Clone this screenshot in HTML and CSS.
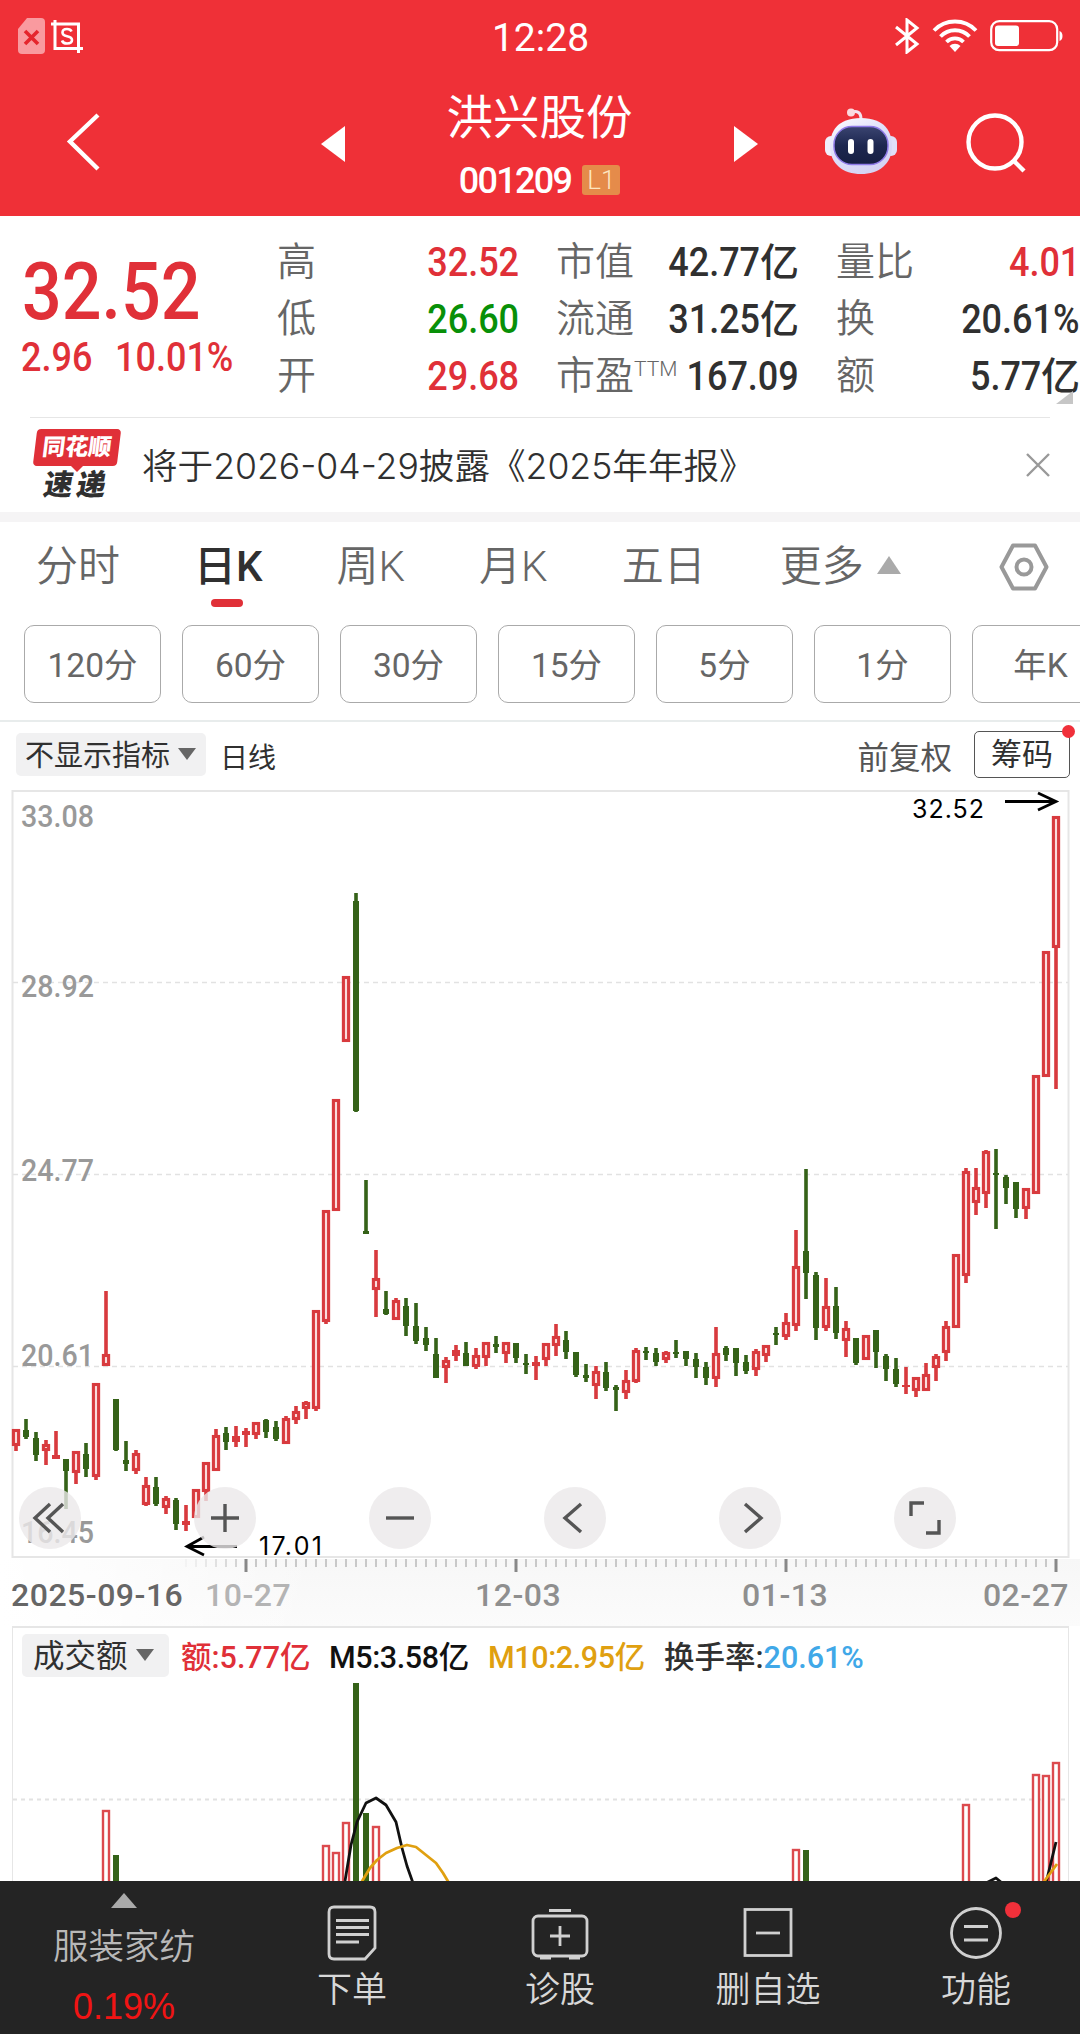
FILE: index.html
```html
<!DOCTYPE html>
<html lang="zh-CN">
<head>
  <meta charset="UTF-8">
  <meta name="viewport" content="width=device-width, initial-scale=1.0">
  <title>洪兴股份 001209</title>
  <link rel="stylesheet" href="styles.css">
</head>
<body>

  <header class="top">
    <div class="status">
      <div class="status-left">
        <svg width="27" height="36" viewBox="0 0 27 36">
          <path d="M9 0H23a4 4 0 0 1 4 4V32a4 4 0 0 1-4 4H4a4 4 0 0 1-4-4V11Z" fill="#f99a9f"/>
          <path d="M7 13L20 26M20 13L7 26" stroke="#e5252d" stroke-width="3.6"/>
        </svg>
        <svg width="32" height="33" viewBox="0 0 32 33" fill="none" stroke="#fff">
          <path d="M0 4H27.500V33M4 0V28.500H32" stroke-width="3"/>
          <path d="M20.500 11.500Q19.500 9 16 9Q11.500 9 11.500 12.500Q11.500 15.500 16 16.200Q21 17 21 20Q21 23.500 16 23.500Q12 23.500 11 20.500" stroke-width="2.600"/>
        </svg>
      </div>
      <div class="clock">12:28</div>
      <div class="status-right">
        <svg width="26" height="36" viewBox="0 0 26 36" fill="none" stroke="#fff" stroke-width="3">
          <path d="M2 9L23 26L13 34V2L23 10L2 27"/>
        </svg>
        <svg width="46" height="34" viewBox="0 0 46 34" fill="none" stroke="#fff" stroke-width="3.800">
          <path d="M2 11.500A29 29 0 0 1 44 11.500M8.500 17.500A20 20 0 0 1 37.500 17.500M14.500 23A12 12 0 0 1 31.500 23"/>
          <path d="M23 33L17.500 27A8 8 0 0 1 28.500 27Z" fill="#fff" stroke="none"/>
        </svg>
        <svg width="73" height="32" viewBox="0 0 73 32">
          <rect x="1.200" y="1.200" width="66" height="29" rx="8" fill="none" stroke="#fff" stroke-width="2.200"/>
          <rect x="5" y="5.500" width="24" height="20.500" rx="3" fill="#fff"/>
          <path d="M69.500 11Q72.500 12 72.500 16T69.500 21Z" fill="#fff"/>
        </svg>
      </div>
    </div>

    <div class="title-bar">
      <svg class="back" width="34" height="58" viewBox="0 0 34 58">
        <path d="M32 2L4 28.500L32 56" fill="none" stroke="#fff" stroke-width="4.400"/>
      </svg>
      <div class="stock">
        <svg width="24" height="36" viewBox="0 0 24 36"><path d="M24 0V36L0 18Z" fill="#fff"/></svg>
        <div class="stock-name">
          <h1>洪兴股份</h1>
          <div class="stock-code"><span class="code">001209</span><span class="level">L1</span></div>
        </div>
        <svg width="24" height="36" viewBox="0 0 24 36"><path d="M0 0V36L24 18Z" fill="#fff"/></svg>
      </div>
      <svg class="robot" width="72" height="66" viewBox="0 0 72 66">
        <defs>
          <linearGradient id="shell" x1="0" y1="0" x2="0.600" y2="1">
            <stop offset="0" stop-color="#fff"/>
            <stop offset="0.500" stop-color="#dfe0fa"/>
            <stop offset="1" stop-color="#d5d3f3"/>
          </linearGradient>
          <linearGradient id="face" x1="0" y1="0" x2="0" y2="1">
            <stop offset="0" stop-color="#3a4470"/>
            <stop offset="0.500" stop-color="#1d2750"/>
            <stop offset="1" stop-color="#171f42"/>
          </linearGradient>
        </defs>
        <path d="M25 4.500Q36 1 36 11" fill="none" stroke="#f2e4f0" stroke-width="3"/>
        <circle cx="26" cy="4.500" r="4" fill="#fbd9de"/>
        <rect x="0" y="28" width="12" height="20" rx="6" fill="#f0effc"/>
        <rect x="60" y="28" width="12" height="20" rx="6" fill="#e0dff8"/>
        <path d="M36 10C60 10 67 24 67 38C67 56 54 66 36 66S5 56 5 38C5 24 12 10 36 10Z" fill="url(#shell)"/>
        <rect x="9" y="18.500" width="54" height="38" rx="18" fill="url(#face)" stroke="#8f7be8" stroke-width="1.500"/>
        <rect x="23" y="31" width="6" height="15" rx="3" fill="#fff"/>
        <rect x="42.500" y="31" width="6" height="15" rx="3" fill="#fff"/>
      </svg>
      <svg class="search" width="62" height="60" viewBox="0 0 62 60" fill="none" stroke="#fff" stroke-width="4.400">
        <circle cx="29" cy="29" r="26.500"/>
        <path d="M48 48L58 58"/>
      </svg>
    </div>
  </header>

  <section class="quote">
    <div class="price">
      <div class="last"><span class="num">32.52</span></div>
      <div class="change"><span class="num">2.96</span><span class="num">10.01%</span></div>
    </div>
    <dl class="stats stats-a">
      <dt>高</dt><dd class="up"><span class="num">32.52</span></dd>
      <dt>低</dt><dd class="down"><span class="num">26.60</span></dd>
      <dt>开</dt><dd class="up"><span class="num">29.68</span></dd>
    </dl>
    <dl class="stats stats-b">
      <dt>市值</dt><dd><span class="num">42.77</span>亿</dd>
      <dt>流通</dt><dd><span class="num">31.25</span>亿</dd>
      <dt>市盈<sup>TTM</sup></dt><dd><span class="num">167.09</span></dd>
    </dl>
    <dl class="stats stats-c">
      <dt>量比</dt><dd class="up"><span class="num">4.01</span></dd>
      <dt>换</dt><dd><span class="num">20.61%</span></dd>
      <dt>额</dt><dd><span class="num">5.77</span>亿</dd>
    </dl>
    <i class="corner"></i>
  </section>

  <section class="notice">
    <div class="logo">
      <span class="logo-top">同花顺</span>
      <i class="logo-tip"></i>
      <span class="logo-bottom">速递</span>
    </div>
    <p>将于2026-04-29披露《2025年年报》</p>
    <svg width="24" height="24" viewBox="0 0 24 24"><path d="M1 1L23 23M23 1L1 23" stroke="#999" stroke-width="2.400"/></svg>
  </section>

  <nav class="tabs">
    <span>分时</span>
    <span class="active">日K</span>
    <span>周K</span>
    <span>月K</span>
    <span>五日</span>
    <span class="more">更多<i class="tri-up"></i></span>
    <svg width="50" height="48" viewBox="0 0 50 48" fill="none" stroke="#999" stroke-width="4">
      <path d="M14 2.500H36L47.500 24L36 45.500H14L2.500 24Z" stroke-linejoin="round"/>
      <circle cx="25" cy="24" r="7.500"/>
    </svg>
  </nav>

  <div class="periods">
    <span>120分</span><span>60分</span><span>30分</span><span>15分</span><span>5分</span><span>1分</span><span>年K</span>
  </div>

  <div class="toolbar">
    <span class="picker">不显示指标<i class="tri-down"></i></span>
    <span class="line-type">日线</span>
    <span class="adjust">前复权</span>
    <span class="chips">筹码<i class="dot"></i></span>
  </div>

  <section class="kline">
    <svg id="kline" width="1080" height="777" viewBox="0 782 1080 777">
      <rect x="12.500" y="791" width="1056" height="766" fill="none" stroke="#e6e6e6" stroke-width="2"/>
      <path d="M13 982.500H1068M13 1174.500H1068M13 1366.500H1068" stroke="#e2e2e2" stroke-width="1.500" stroke-dasharray="5 4"/>
      <g class="axis">
        <text x="21" y="827" textLength="73" lengthAdjust="spacingAndGlyphs">33.08</text>
        <text x="21" y="997" textLength="73" lengthAdjust="spacingAndGlyphs">28.92</text>
        <text x="21" y="1181" textLength="73" lengthAdjust="spacingAndGlyphs">24.77</text>
        <text x="21" y="1366" textLength="73" lengthAdjust="spacingAndGlyphs">20.61</text>
        <text x="21" y="1543" textLength="73" lengthAdjust="spacingAndGlyphs">16.45</text>
      </g>
      <g id="candles"></g>
      <g class="mark">
        <path d="M1005 801.500H1055M1038 793L1056 801.500L1038 810"/>
        <path d="M237 1546.500H187M204 1537L187 1546.500L204 1555"/>
        <text x="912" y="818" textLength="72">32.52</text>
        <text x="259" y="1555" textLength="63">17.01</text>
      </g>
    </svg>
    <div class="controls">
      <button><svg viewBox="0 0 62 62"><path d="M31 17L16 31L31 45M44 17L29 31L44 45"/></svg></button>
      <button><svg viewBox="0 0 62 62"><path d="M31 17V45M17 31H45"/></svg></button>
      <button><svg viewBox="0 0 62 62"><path d="M17 31H45"/></svg></button>
      <button><svg viewBox="0 0 62 62"><path d="M37 17L21 31L37 45"/></svg></button>
      <button><svg viewBox="0 0 62 62"><path d="M26 17L42 31L26 45"/></svg></button>
      <button><svg viewBox="0 0 62 62"><path d="M17 29V16H30M45 33V46H32"/></svg></button>
    </div>
  </section>

  <div class="timeline">
    <svg id="ticks" width="1080" height="15" viewBox="0 0 1080 15"></svg>
    <div class="dates">
      <span class="first">2025-09-16</span>
      <span class="faded">10-27</span>
      <span>12-03</span>
      <span>01-13</span>
      <span>02-27</span>
    </div>
  </div>

  <section class="volume">
    <div class="volume-head">
      <span class="picker">成交额<i class="tri-down"></i></span>
      <span class="v-amount">额:5.77亿</span>
      <span class="v-m5">M5:3.58亿</span>
      <span class="v-m10">M10:2.95亿</span>
      <span class="v-rate">换手率:<em>20.61%</em></span>
    </div>
    <svg width="1055" height="201" viewBox="13 1680 1055 201">
      <path d="M13 1799.500H1068" stroke="#e2e2e2" stroke-width="2" stroke-dasharray="4 4"/>
      <g id="bars"></g>
      <g fill="none" stroke-width="2.800" stroke-linejoin="round">
        <path stroke="#111" d="M345 1881L351 1845L357 1822L366 1803L376 1798L386 1805L396 1822L402 1848L407 1866L413 1883M986 1883L996 1878L1002 1883M1046 1883L1056 1842"/>
        <path stroke="#e0a010" d="M361 1883L370 1868L377 1860L386 1853L397 1848L407 1845L416 1847L426 1855L436 1863L443 1873L449 1883M1043 1883L1057 1864"/>
      </g>
    </svg>
  </section>

  <footer class="bottom">
    <div class="sector">
      <i class="tri-up"></i>
      <span>服装家纺</span>
      <b>0.19%</b>
    </div>
    <div class="item">
      <svg width="60" height="56" viewBox="0 0 60 56">
        <path d="M12 2H48Q53 2 53 7V43L43 54H12Q7 54 7 49V7Q7 2 12 2Z"/>
        <path d="M14 15.500H47M14 22.500H47M14 29.500H47M14 37H37"/>
      </svg>
      <span>下单</span>
    </div>
    <div class="item">
      <svg width="60" height="56" viewBox="0 0 60 56">
        <rect x="3" y="11" width="54" height="40" rx="5"/>
        <path d="M19 5.500H41M30 21V41M20 31H40M10 53H21M39 53H50"/>
      </svg>
      <span>诊股</span>
    </div>
    <div class="item">
      <svg width="60" height="56" viewBox="0 0 60 56">
        <rect x="7" y="4.500" width="46" height="46"/>
        <path d="M18 28H42"/>
      </svg>
      <span>删自选</span>
    </div>
    <div class="item">
      <svg width="60" height="56" viewBox="0 0 60 56">
        <circle cx="30" cy="28" r="24.500"/>
        <path d="M18 21.500H42M18 35H42"/>
      </svg>
      <i class="dot"></i>
      <span>功能</span>
    </div>
  </footer>

  <script src="chart.js"></script>
</body>
</html>
```

FILE: styles.css
```css
* {
  box-sizing: border-box;
}

body {
  margin: 0;
  width: 1080px;
  height: 2034px;
  overflow: hidden;
  background: #fff;
  color: #303030;
  font-family: Roboto, "Noto Sans CJK SC", sans-serif;
}

svg {
  display: block;
  flex-shrink: 0;
}

h1, p, dl, dd {
  margin: 0;
}

i, em {
  font-style: normal;
}

.num {
  display: inline-block;
  transform: scaleX(0.9);
  transform-origin: right;
}

.tri-up,
.tri-down {
  display: inline-block;
  border: solid transparent;
}

/* header */
.top {
  height: 216px;
  background: #ef3037;
  color: #fff;
}

.status {
  height: 72px;
  padding: 0 17px 0 18px;
  display: grid;
  grid-template-columns: 1fr auto 1fr;
  align-items: center;
}

.status-left,
.status-right {
  display: flex;
  align-items: center;
  gap: 6px;
}

.status-right {
  justify-content: flex-end;
  gap: 12px;
}

.clock {
  font-size: 39px;
  line-height: 40px;
  padding-top: 4px;
}

.title-bar {
  height: 144px;
  padding: 0 52px 0 66px;
  display: flex;
  align-items: flex-start;
}

.back {
  margin: 41px 221px 0 0;
}

.stock {
  width: 438px;
  display: flex;
  justify-content: space-between;
}

.stock > svg {
  margin-top: 54px;
}

.stock-name {
  text-align: center;
}

.stock-name h1 {
  margin-top: 18px;
  font-size: 46.5px;
  line-height: 56px;
  font-weight: 400;
}

.stock-code {
  display: flex;
  align-items: center;
  justify-content: center;
  margin-top: 19px;
  height: 30px;
}

.code {
  padding-top: 2px;
  font-size: 36px;
  font-weight: 500;
  letter-spacing: -1.7px;
  margin-right: 11px;
}

.level {
  width: 38px;
  height: 30px;
  border-radius: 3px;
  background: #e58b4a;
  color: #fde6c0;
  font-size: 26px;
  font-weight: 300;
  line-height: 31px;
}

.robot {
  margin: 36px 0 0 67px;
}

.search {
  margin: 41px 0 0 69px;
}

/* quote */
.quote {
  height: 201px;
  display: flex;
  position: relative;
}

.price {
  width: 277px;
  padding-left: 22px;
  color: #e03038;
}

.price .num {
  transform-origin: left;
}

.last {
  margin-top: 36px;
  font-size: 80px;
  line-height: 80px;
  font-weight: 500;
}

.last .num {
  transform: scaleX(0.875);
}

.change {
  display: flex;
  gap: 15px;
  margin: 3px 0 0 -1px;
  font-size: 40px;
  line-height: 46px;
  font-weight: 500;
}

.stats {
  display: grid;
  grid-template-columns: auto auto;
  grid-template-rows: repeat(3, 57px);
  justify-content: space-between;
  align-items: center;
  padding-top: 18px;
  font-size: 39px;
  line-height: 57px;
  white-space: nowrap;
}

.stats dt {
  color: #666;
  font-weight: 350;
}

.stats dd {
  text-align: right;
  font-weight: 500;
}

.stats .num {
  margin-left: -20px;
  font-size: 40px;
}

.stats-a {
  width: 242px;
}

.stats-b {
  width: 243px;
  margin-left: 37px;
}

.stats-c {
  width: 244px;
  margin-left: 37px;
}

.stats sup {
  font-size: 21px;
  line-height: 0;
  vertical-align: 13px;
}

.up {
  color: #e03038;
}

.down {
  color: #089008;
}

.corner {
  position: absolute;
  right: 7px;
  bottom: 13px;
  border-left: 17px solid transparent;
  border-bottom: 13px solid #c6c6c6;
}

/* notice */
.notice {
  margin: 0 30px;
  height: 95px;
  border-top: 1px solid #e6e6e6;
  display: flex;
  align-items: center;
}

.logo {
  width: 90px;
  margin-left: 2px;
  display: flex;
  flex-direction: column;
  align-items: center;
  font-weight: 900;
}

.logo-top {
  width: 84px;
  height: 37px;
  border-radius: 4px;
  background: #e03038;
  color: #fff;
  font-size: 23px;
  line-height: 37px;
  text-align: center;
  transform: skewX(-7deg);
}

.logo-tip {
  border: solid transparent;
  border-width: 6px 6px 0;
  border-top-color: #e03038;
}

.logo-bottom {
  margin-top: -3px;
  font-size: 29px;
  line-height: 32px;
  letter-spacing: 4px;
  transform: skewX(-10deg);
}

.notice p {
  flex: 1;
  margin: -4px 0 0 20px;
  font-family: Inter, "Noto Sans CJK SC", sans-serif;
  font-size: 35.6px;
  font-weight: 350;
}

/* tabs */
.tabs {
  height: 103px;
  border-top: 10px solid #f5f4f5;
  padding: 0 31px 4px 36px;
  display: flex;
  align-items: center;
  font-size: 42px;
  line-height: 60px;
  color: #666;
  font-weight: 350;
}

.tabs span {
  margin-right: 74px;
  white-space: nowrap;
}

.tabs .active {
  color: #303030;
  font-weight: 500;
  position: relative;
}

.tabs .active::after {
  content: "";
  position: absolute;
  left: 17px;
  bottom: -10px;
  width: 32px;
  height: 8px;
  border-radius: 4px;
  background: #e03038;
}

.tabs .more {
  margin-right: auto;
}

.more .tri-up {
  margin: 0 0 7px 13px;
  border-width: 0 12px 18px;
  border-bottom-color: #aaa;
}

/* period pills */
.periods {
  height: 107px;
  padding: 10px 0 0 24px;
  border-bottom: 2px solid #e8ecec;
  display: flex;
  gap: 21px;
  overflow: hidden;
}

.periods span {
  flex: 0 0 137px;
  height: 78px;
  border: 1.5px solid #aaa;
  border-radius: 10px;
  color: #666;
  font-size: 33.5px;
  line-height: 79px;
  text-align: center;
}

/* indicator toolbar */
.toolbar {
  height: 60px;
  padding: 5px 10px 0 16px;
  display: flex;
  align-items: center;
}

.picker {
  height: 43px;
  padding: 0 10px 0 9px;
  border-radius: 5px;
  background: #f1f1f2;
  font-size: 29px;
  line-height: 46px;
  white-space: nowrap;
}

.tri-down {
  margin: 0 0 6px 8px;
  border-width: 12px 9px 0;
  border-top-color: #666;
}

.line-type {
  margin-left: 14px;
  padding-top: 2px;
  font-size: 28px;
}

.adjust {
  margin-left: auto;
  color: #555;
  font-size: 31.5px;
}

.chips {
  position: relative;
  width: 96px;
  height: 47px;
  margin-left: 22px;
  border: 1.5px solid #555;
  border-radius: 5px;
  font-size: 31px;
  line-height: 46px;
  text-align: center;
}

.dot {
  position: absolute;
  border-radius: 50%;
  background: #f0303a;
}

.chips .dot {
  top: -7px;
  right: -6px;
  width: 13px;
  height: 13px;
}

/* chart */
.kline {
  position: relative;
  height: 777px;
}

.kline > svg {
  overflow: visible;
}

.axis text {
  fill: #999;
  font-size: 31px;
  font-weight: 500;
}

.mark path {
  fill: none;
  stroke: #000;
  stroke-width: 2.8;
}

.mark text {
  font-family: Inter, sans-serif;
  font-size: 25px;
  font-weight: 400;
}

.controls {
  position: absolute;
  left: 19px;
  bottom: 10px;
  display: flex;
  gap: 113px;
}

.controls button {
  width: 62px;
  height: 62px;
  padding: 0;
  border: none;
  border-radius: 50%;
  background: rgba(235, 233, 234, 0.8);
}

.controls path {
  fill: none;
  stroke: #555;
  stroke-width: 3.4;
}

.timeline {
  height: 67px;
  background: linear-gradient(90deg, #fff, transparent 30%), linear-gradient(#f7f7f7, #fbfbfb);
}

.dates {
  padding: 5px 11px 0;
  display: grid;
  grid-template-columns: 194px 270px 267px 1fr auto;
  color: #8f8f8f;
  font-size: 32px;
  line-height: 32px;
  font-weight: 500;
  letter-spacing: 0.5px;
}

.dates .first {
  color: #666;
}

.dates .faded {
  color: #b4b4b4;
}

/* volume */
.volume {
  height: 255px;
  margin: 0 11px 0 12px;
  border: solid #e6e6e6;
  border-width: 2px 1px 0;
}

.volume-head {
  height: 52px;
  padding: 2px 9px 0;
  display: flex;
  align-items: center;
  font-size: 30.5px;
  font-weight: 500;
  white-space: nowrap;
}

.volume-head .picker {
  width: 147px;
  height: 43px;
  margin-right: 12px;
  padding-left: 11px;
  font-size: 31.5px;
  font-weight: 400;
}

.v-amount {
  width: 148px;
  color: #e03038;
}

.v-m5 {
  width: 159px;
  color: #111;
  letter-spacing: -0.4px;
}

.v-m10 {
  width: 176px;
  color: #e0a010;
  letter-spacing: -0.4px;
}

.v-rate em {
  color: #40a8e8;
}

/* bottom bar */
.bottom {
  height: 153px;
  background: #242424;
  color: #d8d8d8;
  display: flex;
}

.sector {
  width: 248px;
  padding-top: 12px;
  display: flex;
  flex-direction: column;
  align-items: center;
  font-size: 35.5px;
}

.sector .tri-up {
  border-width: 0 13px 15px;
  border-bottom-color: #aaa;
}

.sector span {
  margin-top: 14px;
  line-height: 50px;
  color: #b8b8b8;
  font-weight: 350;
}

.sector b {
  margin-top: 15px;
  color: #f01414;
  font-family: "Liberation Sans", sans-serif;
  font-size: 36px;
  line-height: 40px;
  font-weight: 400;
}

.item {
  position: relative;
  width: 208px;
  padding-top: 24px;
  display: flex;
  flex-direction: column;
  align-items: center;
  font-size: 35px;
  line-height: 50px;
  font-weight: 350;
}

.item span {
  margin-top: 5px;
}

.item svg {
  fill: none;
  stroke: #d0d0d0;
  stroke-width: 2.8;
}

.item .dot {
  top: 21px;
  right: 59px;
  width: 16px;
  height: 16px;
}
```

FILE: chart.js
```js
const NS = "http://www.w3.org/2000/svg";
const RED = "#d83a3e";
const GREEN = "#356218";

// [up or down, high, body top, body bottom, low]
const candles = [
  ["r",1429,1429,1446,1451],["g",1419,1430,1437,1439],["g",1432,1438,1455,1461],["r",1440,1444,1451,1465],
  ["r",1431,1455,1459,1459],["g",1459,1459,1471,1509],["r",1451,1451,1473,1484],["g",1443,1454,1469,1477],
  ["r",1383,1383,1477,1480],["r",1291,1354,1366,1366],["g",1399,1399,1450,1451],["g",1441,1460,1464,1471],
  ["r",1450,1453,1471,1474],["r",1477,1485,1505,1506],["g",1477,1487,1504,1506],["r",1496,1498,1508,1514],
  ["g",1498,1500,1524,1530],["r",1505,1521,1525,1531],["r",1489,1489,1518,1518],["r",1462,1462,1492,1501],
  ["r",1429,1435,1471,1471],["g",1427,1433,1442,1450],["r",1426,1436,1442,1447],["r",1428,1431,1435,1447],
  ["r",1422,1422,1435,1439],["g",1419,1420,1432,1438],["g",1421,1427,1439,1441],["r",1416,1418,1444,1444],
  ["r",1406,1411,1420,1424],["r",1401,1402,1409,1419],["r",1310,1310,1409,1411],["r",1210,1210,1322,1324],
  ["r",1099,1099,1211,1211],["r",976,976,1042,1042],["g",893,901,1111,1112],["g",1180,1231,1234,1234],
  ["r",1250,1278,1290,1317],["g",1291,1309,1314,1315],["r",1298,1300,1320,1320],["g",1298,1306,1326,1336],
  ["g",1303,1326,1341,1344],["g",1327,1338,1345,1351],["g",1338,1354,1378,1378],["r",1357,1360,1368,1383],
  ["r",1345,1350,1356,1361],["g",1342,1353,1366,1366],["r",1348,1355,1367,1369],["r",1342,1342,1358,1366],
  ["g",1336,1344,1347,1353],["r",1342,1342,1354,1363],["g",1343,1343,1358,1363],["g",1354,1363,1365,1374],
  ["r",1356,1362,1366,1380],["r",1343,1343,1360,1366],["r",1324,1336,1346,1356],["g",1331,1340,1352,1359],
  ["g",1352,1352,1375,1377],["g",1364,1375,1378,1382],["r",1366,1371,1386,1399],["g",1362,1372,1388,1391],
  ["g",1385,1387,1390,1411],["r",1370,1380,1393,1399],["r",1348,1350,1382,1383],["g",1347,1351,1353,1360],
  ["g",1348,1353,1362,1366],["r",1351,1352,1360,1363],["g",1340,1352,1354,1358],["g",1351,1351,1359,1366],
  ["g",1353,1359,1367,1378],["g",1362,1367,1378,1385],["r",1327,1353,1379,1387],["g",1346,1348,1355,1361],
  ["g",1348,1348,1363,1376],["g",1355,1362,1371,1374],["r",1349,1351,1370,1376],["r",1345,1345,1356,1362],
  ["g",1327,1333,1335,1345],["r",1313,1322,1337,1340],["r",1230,1266,1326,1331],["g",1169,1251,1273,1299],
  ["g",1272,1275,1328,1340],["r",1278,1306,1328,1331],["g",1287,1306,1333,1339],["r",1321,1328,1341,1357],
  ["g",1338,1338,1363,1365],["r",1335,1335,1360,1360],["g",1330,1330,1352,1368],["g",1354,1356,1369,1381],
  ["g",1358,1369,1384,1387],["r",1367,1385,1387,1394],["r",1377,1377,1391,1397],["r",1363,1374,1391,1391],
  ["r",1354,1356,1368,1381],["r",1321,1326,1353,1361],["r",1254,1254,1328,1328],["r",1168,1171,1276,1283],
  ["r",1168,1187,1203,1215],["r",1150,1151,1194,1208],["g",1149,1173,1175,1229],["g",1175,1177,1188,1204],
  ["g",1182,1182,1209,1218],["r",1188,1188,1209,1219],["r",1075,1075,1194,1194],["r",951,951,1077,1077],
  ["r",816,816,948,1089]
];

// candle index -> top of the volume bar
const volumes = {
  9: 1810, 10: 1855, 31: 1845, 32: 1852, 33: 1822, 34: 1683, 35: 1813, 36: 1826,
  78: 1849, 79: 1850, 95: 1804, 102: 1774, 103: 1775, 104: 1762
};

function centerX(i) {
  return 16 + i * 10;
}

function addRect(parent, x, y, w, h, attrs) {
  const rect = document.createElementNS(NS, "rect");
  const all = Object.assign({ x: x, y: y, width: w, height: h }, attrs);
  for (const key in all) rect.setAttribute(key, all[key]);
  parent.appendChild(rect);
}

const candleGroup = document.getElementById("candles");
candles.forEach(([type, high, top, bottom, low], i) => {
  const x = centerX(i);
  const color = type === "r" ? RED : GREEN;
  addRect(candleGroup, x - 1.8, high, 3.6, low - high, { fill: color });
  if (type === "g") {
    addRect(candleGroup, x - 3, top, 6, bottom - top, { fill: color });
  } else if (bottom - top < 7) {
    addRect(candleGroup, x - 4, top, 8, bottom - top, { fill: color });
  } else {
    addRect(candleGroup, x - 2.6, top + 1.5, 5.2, bottom - top - 3, { fill: "#fbdcdc", stroke: color, "stroke-width": 3.1 });
  }
});

const barGroup = document.getElementById("bars");
for (const i in volumes) {
  const x = centerX(Number(i));
  const top = volumes[i];
  if (candles[i][0] === "g") {
    addRect(barGroup, x - 3, top, 6, 1890 - top, { fill: GREEN });
  } else {
    addRect(barGroup, x - 3, top + 1, 6, 1890 - top, { fill: "#fff", stroke: "#dc4a4e", "stroke-width": 2.4 });
  }
}

const ticks = document.getElementById("ticks");
for (let i = 17; i < candles.length; i++) {
  const major = (i - 23) % 27 === 0;
  const x = centerX(i);
  if (major) addRect(ticks, x - 1.5, 0, 3, 13, { fill: "#888" });
  else addRect(ticks, x - 0.5, 0, 1, 8, { fill: "#999", opacity: i < 23 ? (i - 16) / 8 : 1 });
}
```
